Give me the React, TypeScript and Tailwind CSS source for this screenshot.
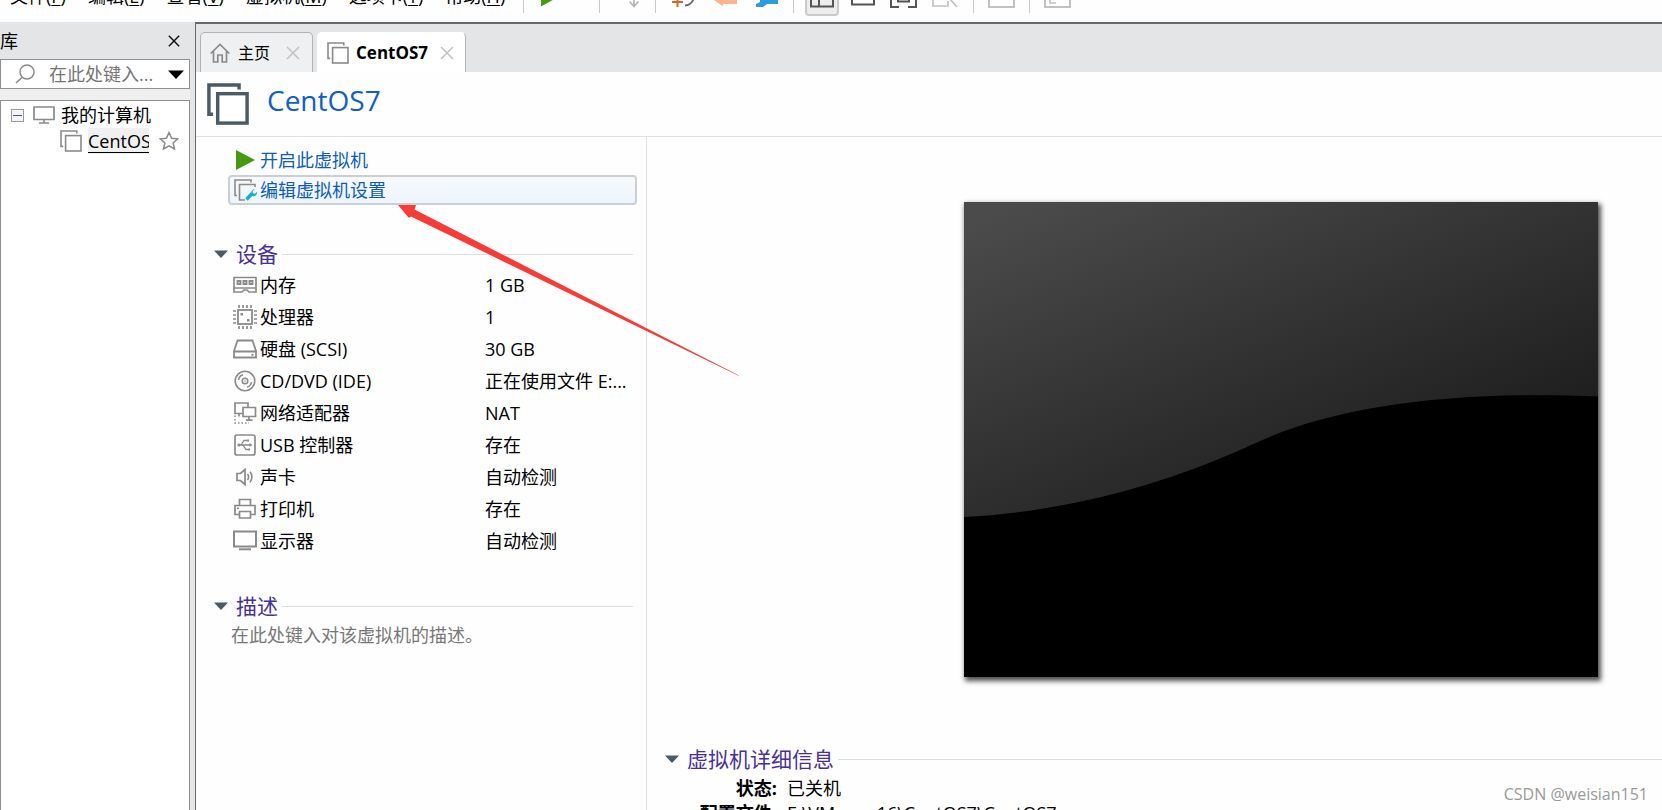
import type { ReactNode } from "react";

const G = "#8a8a8a";

function Icon({ w = 24, h = 24, children, className = "" }: { w?: number; h?: number; children: ReactNode; className?: string }) {
  return (
    <svg width={w} height={h} viewBox={`0 0 ${w} ${h}`} fill="none" className={`shrink-0 ${className}`} aria-hidden="true">
      {children}
    </svg>
  );
}

function VmIcon({ size = 22, color = G, stroke = 1.6 }: { size?: number; color?: string; stroke?: number }) {
  return (
    <svg width={size} height={size} viewBox="0 0 22 22" fill="none" stroke={color} strokeWidth={stroke} className="shrink-0" aria-hidden="true">
      <path d="M3.2 16.4H1V1h15.800v2.400" />
      <rect x="5.600" y="5.600" width="15.400" height="15.400" fill="#fff" />
    </svg>
  );
}

function Cross({ size, color }: { size: number; color: string }) {
  return (
    <svg width={size} height={size} viewBox="0 0 14 14" stroke={color} strokeWidth="1.7" aria-hidden="true">
      <path d="M1 1l12 12M13 1L1 13" />
    </svg>
  );
}

const menus = [
  { label: "文件", key: "F" },
  { label: "编辑", key: "E" },
  { label: "查看", key: "V" },
  { label: "虚拟机", key: "M" },
  { label: "选项卡", key: "T" },
  { label: "帮助", key: "H" },
];

function Separator() {
  return <div className="h-[34px] w-px shrink-0 bg-[#c9c9c9]" />;
}

function Toolbar() {
  return (
    <header className="flex h-[22px] shrink-0 items-end overflow-hidden">
      <div className="flex h-[52px] shrink-0 items-center">
        <nav className="flex w-[523px] shrink-0 gap-[22px] pl-2.5 text-[18px] leading-[24px]">
          {menus.map((m) => (
            <button key={m.key} type="button" className="whitespace-nowrap">
              {m.label}(<u className="underline-offset-2">{m.key}</u>)
            </button>
          ))}
        </nav>
        <Separator />
        <button type="button" aria-label="开启" className="ml-4">
          <Icon><path d="M1 2v20.5L20 12z" fill="#459a10" /></Icon>
        </button>
        <div className="w-[35px]" />
        <Separator />
        <button type="button" aria-label="发送" className="ml-[22px]">
          <Icon><path d="M12 2v20M7.500 17.500L12 22.500l4.500-5" stroke="#b5b5b5" strokeWidth="1.700" /></Icon>
        </button>
        <div className="w-[9px]" />
        <Separator />
        <button type="button" aria-label="拍摄快照" className="ml-4">
          <Icon>
            <path d="M5.500 13v10M0 18h11" stroke="#d8642a" strokeWidth="2" />
            <path d="M5 8a9 9 0 1 1 8 13.500" stroke="#666" strokeWidth="1.900" />
          </Icon>
        </button>
        <button type="button" aria-label="恢复快照" className="ml-[17px]">
          <Icon><path d="M24 10v10H10v2.500L1 16l9-7v1z" fill="#ffb38e" /></Icon>
        </button>
        <button type="button" aria-label="管理快照" className="ml-[18px]">
          <Icon><path d="M5 6h18v14H12l-4 3H1v-3l4-2z" fill="#2d9bdf" /></Icon>
        </button>
        <div className="w-3.5" />
        <Separator />
        <button type="button" aria-label="显示库" className="ml-[11px] flex h-10 w-[34px] items-center justify-center rounded border-2 border-[#c9cbcb] bg-[#ededed]">
          <Icon><path d="M1 1h22v21.500H1zM9 1v21.500M1 15h8" stroke="#555" strokeWidth="2" /></Icon>
        </button>
        <button type="button" aria-label="缩略图" className="ml-3">
          <Icon><path d="M1 3h22v17.500H1z" stroke="#555" strokeWidth="2" /></Icon>
        </button>
        <button type="button" aria-label="全屏" className="ml-[15px]">
          <Icon w={27}><path d="M9 1H1v22h8M18 1h8v22h-8M8 7h11v10.500H8z" stroke="#555" strokeWidth="2" /></Icon>
        </button>
        <button type="button" aria-label="Unity" className="ml-[15px]">
          <Icon w={26}><path d="M1 1v21h15v-5M10 6l15 17" stroke="#c2c2c2" strokeWidth="1.700" /></Icon>
        </button>
        <div className="w-[15px]" />
        <Separator />
        <button type="button" aria-label="控制台" className="ml-3.5">
          <Icon w={27}><path d="M1 1h25v22H1z" stroke="#c2c2c2" strokeWidth="2" /></Icon>
        </button>
        <div className="w-3.5" />
        <Separator />
        <button type="button" aria-label="拉伸" className="ml-3.5">
          <Icon w={27}>
            <path d="M1 1h25v22H1z" stroke="#c2c2c2" strokeWidth="2" />
            <path d="M6 9v10h6M8 16l5-6" stroke="#c2c2c2" strokeWidth="1.700" />
          </Icon>
        </button>
      </div>
    </header>
  );
}

function Library() {
  return (
    <aside className="flex w-[195px] shrink-0 flex-col bg-[#e3e5e7] pr-[5px]">
      <div className="flex h-[37px] items-center justify-between pr-2.5">
        <h2 className="text-[18px] leading-[24px]">库</h2>
        <button type="button" aria-label="关闭库">
          <Cross size={12} color="#111" />
        </button>
      </div>
      <div className="flex h-[30px] shrink-0 items-center border border-[#8e9093] bg-white pr-[5px]">
        <Icon w={20} h={20} className="ml-3.5">
          <circle cx="12" cy="8" r="7" stroke={G} strokeWidth="1.500" />
          <path d="M7 13.500L1 19" stroke={G} strokeWidth="1.600" />
        </Icon>
        <input
          type="text"
          aria-label="在此处键入内容进行搜索"
          placeholder="在此处键入..."
          className="ml-3.5 min-w-0 flex-1 bg-transparent text-[18px] leading-[24px] outline-none placeholder:text-[#757575]"
        />
        <Icon w={16} h={9}><path d="M0 .5h16L8 9z" fill="#000" /></Icon>
      </div>
      <div className="h-[11px] shrink-0 bg-[#efefef]" />
      <ul className="min-h-0 flex-1 border border-b-0 border-[#8e9093] bg-white pt-px text-[18px]">
        <li className="flex h-[26px] items-center pl-2.5">
          <button type="button" aria-label="折叠" className="flex size-[13px] items-center justify-center border border-[#9a9a9a] bg-[#f4f4f4]">
            <span className="h-px w-[9px] bg-[#4054a0]" />
          </button>
          <Icon w={22} h={18} className="ml-[9px]">
            <path d="M1 1h20v12.500H1zM11 13.500V17M6 17h10" stroke={G} strokeWidth="1.700" />
          </Icon>
          <span className="ml-1.5 whitespace-nowrap leading-[26px]">我的计算机</span>
        </li>
        <li className="flex h-[26px] items-center pl-[59px]">
          <VmIcon size={22} />
          <a href="#centos7" className="ml-1.5 w-[61px] overflow-hidden bg-[#f0f0f0] leading-[26px] underline underline-offset-4">
            CentOS7
          </a>
          <Icon w={20} h={20} className="ml-2.5">
            <path d="M10 1.500l2.600 5.700 6.200.6-4.700 4.100 1.400 6.100L10 14.800 4.500 18l1.400-6.100L1.200 7.800l6.200-.6z" stroke={G} strokeWidth="1.500" />
          </Icon>
        </li>
      </ul>
    </aside>
  );
}

function Tabs() {
  return (
    <div role="tablist" className="flex h-[48px] shrink-0 items-end bg-[#e3e5e7] pl-1">
      <div className="flex h-10 w-[113px] items-center rounded-t-[5px] border border-b-0 border-[#b1b3b5] bg-[#eef0f1] pl-[9px]">
        <Icon w={20} h={20}>
          <path d="M.7 10.500L10 1.500l9.300 9M3.500 8.500V19h4.300v-7h4.400v7h4.300V8.500" stroke={G} strokeWidth="1.700" />
        </Icon>
        <button type="button" role="tab" aria-selected="false" className="ml-2 text-[16px] leading-[24px]">主页</button>
        <button type="button" aria-label="关闭主页" className="ml-4"><Cross size={14} color="#c4c4c4" /></button>
      </div>
      <div className="ml-1 flex h-10 w-[149px] items-center rounded-t-[5px] border border-b-0 border-[#b1b3b5] border-l-white border-t-white bg-white pl-[9px]">
        <VmIcon size={22} />
        <button type="button" role="tab" aria-selected="true" className="ml-[7px] w-[72px] text-left text-[17px] leading-[24px] font-bold">CentOS7</button>
        <button type="button" aria-label="关闭 CentOS7" className="ml-3"><Cross size={14} color="#c4c4c4" /></button>
      </div>
    </div>
  );
}

function SectionTitle({ children }: { children: ReactNode }) {
  return (
    <div className="flex h-[30px] items-center">
      <Icon w={14} h={8}><path d="M0 .5h14L7 8z" fill="#4a5a66" /></Icon>
      <h3 className="ml-2 text-[21px] leading-[30px] text-[#48309a]">{children}</h3>
      <div className="ml-1 h-px flex-1 bg-[#dcdfe0]" />
    </div>
  );
}

const memory = (
  <Icon>
    <path d="M1 4.500h22v14.500h-7l-2-2h-3l-2 2H1zM1 15h22" stroke={G} strokeWidth="1.700" />
    <path d="M4.500 8h3v3h-3zM10.500 8h3v3h-3zM16.500 8h3v3h-3z" stroke={G} strokeWidth="1.900" />
  </Icon>
);
const cpu = (
  <Icon>
    <rect x="5" y="5" width="14" height="14" stroke={G} strokeWidth="1.800" />
    <path d="M6 0v3M10 0v3M14 0v3M18 0v3M6 21v3M10 21v3M14 21v3M18 21v3M0 6h3M0 10h3M0 14h3M0 18h3M21 6h3M21 10h3M21 14h3M21 18h3" stroke={G} strokeWidth="1.700" />
    <path d="M7.500 8h2.500v2.500H7.500zM14 14h2.500v2.500H14z" fill={G} />
  </Icon>
);
const disk = (
  <Icon>
    <path d="M1 14L4.500 3.500h15L23 14v6.500H1zM1 14.500h22" stroke={G} strokeWidth="1.800" />
    <path d="M18.500 16.800h2v2h-2z" fill={G} />
  </Icon>
);
const disc = (
  <Icon>
    <circle cx="12" cy="12" r="9.800" stroke={G} strokeWidth="1.600" />
    <circle cx="12" cy="12" r="2.800" stroke={G} strokeWidth="1.500" />
    <circle cx="12" cy="12" r=".8" fill={G} />
    <path d="M5.500 11A6.500 6.500 0 0 1 10 5.800M18.500 13a6.500 6.500 0 0 1-4.500 5.200" stroke={G} strokeWidth="1.500" />
  </Icon>
);
const network = (
  <Icon>
    <path d="M9 12.500H2V2h13v4M6 15.500v-3M10 6.500h12.500v9H10zM16 15.500V19M13 19.200h6.500" stroke={G} strokeWidth="1.700" />
    <path d="M2 14.500V22h14" stroke={G} strokeWidth="1.500" strokeDasharray="1.500 2" />
  </Icon>
);
const usb = (
  <Icon>
    <rect x="2" y="2" width="20" height="20" rx="2" stroke={G} strokeWidth="1.700" />
    <path d="M5 12h12M8 12l3-4.500h3M10 12l3 4.500h2" stroke={G} strokeWidth="1.300" />
    <circle cx="6" cy="12" r="1.600" fill={G} />
    <path d="M16.500 10l3 2-3 2zM14 6.500h2v2h-2zM15 15.500h2v2h-2z" fill={G} />
  </Icon>
);
const sound = (
  <Icon>
    <path d="M4 8.500h3.500L12 4.500v15l-4.500-4H4z" stroke={G} strokeWidth="1.700" />
    <path d="M14.500 9a5 5 0 0 1 0 6M17 6.800a8 8 0 0 1 0 10.400" stroke={G} strokeWidth="1.600" />
  </Icon>
);
const printer = (
  <Icon>
    <path d="M6.500 8.500v-6h11v6M6.500 17.500H2v-9h20v9h-4.500M6.500 14.500h11v6.500h-11z" stroke={G} strokeWidth="1.700" />
    <path d="M4 10.500h2v1.500H4z" fill={G} />
  </Icon>
);
const display = (
  <Icon>
    <path d="M1 2.500h22v15H1z" stroke={G} strokeWidth="2" />
    <path d="M6 20.300h12" stroke={G} strokeWidth="2" />
  </Icon>
);

const devices = [
  { icon: memory, name: "内存", value: "1 GB" },
  { icon: cpu, name: "处理器", value: "1" },
  { icon: disk, name: "硬盘 (SCSI)", value: "30 GB" },
  { icon: disc, name: "CD/DVD (IDE)", value: "正在使用文件 E:..." },
  { icon: network, name: "网络适配器", value: "NAT" },
  { icon: usb, name: "USB 控制器", value: "存在" },
  { icon: sound, name: "声卡", value: "自动检测" },
  { icon: printer, name: "打印机", value: "存在" },
  { icon: display, name: "显示器", value: "自动检测" },
];

function Summary() {
  return (
    <section className="w-[451px] shrink-0 border-r border-[#e0e2e3] pt-2 pr-[9px] text-[18px]">
      <div className="pl-8">
        <button type="button" className="flex h-[30px] w-full items-center pl-2 text-[#0d5cb8]">
          <Icon w={20} h={20}><path d="M0 0v20l19-10z" fill="#459a10" /></Icon>
          <span className="ml-1 leading-[26px]">开启此虚拟机</span>
        </button>
        <button type="button" className="flex h-[30px] w-full items-center rounded-[4px] border-2 border-[#cccfd2] bg-linear-to-b from-[#f7f9fb] to-[#edf5fd] pl-1 text-[#0d5cb8]">
          <Icon w={23} h={22}>
            <path d="M3 16.500H1V1h16v2.500" stroke={G} strokeWidth="1.600" />
            <path d="M21 8V5.500H5.500V21H11" stroke={G} strokeWidth="1.600" />
            <path d="M12.500 20.500l5.500-6" stroke="#14b0cf" strokeWidth="3.400" />
            <path d="M21 9.800l-2.500 2.500.5 2 2 .5 2-2c.5 3-2 5-4.500 4.200-2-1.200-2.200-6 2.500-7.200z" fill="#14b0cf" />
          </Icon>
          <span className="ml-[3px] leading-[26px]">编辑虚拟机设置</span>
        </button>
      </div>

      <div className="mt-[34px] pr-1 pl-[18px]">
        <SectionTitle>设备</SectionTitle>
        <table className="ml-[19px] w-[400px] table-fixed border-collapse text-left">
          <colgroup>
            <col className="w-[252px]" />
            <col />
          </colgroup>
          <tbody>
            {devices.map((d) => (
              <tr key={d.name} className="h-8">
                <th scope="row" className="p-0 font-normal">
                  <div className="flex h-8 items-center gap-[3px]">
                    {d.icon}
                    <span className="leading-[26px]">{d.name}</span>
                  </div>
                </th>
                <td className="p-0 leading-[26px] whitespace-nowrap">{d.value}</td>
              </tr>
            ))}
          </tbody>
        </table>
      </div>

      <div className="mt-[34px] pr-1 pl-[18px]">
        <SectionTitle>描述</SectionTitle>
        <p className="pl-[17px] leading-[28px] text-[#777]">在此处键入对该虚拟机的描述。</p>
      </div>
    </section>
  );
}

function Preview() {
  return (
    <div className="ml-[317px] w-[634px] max-w-full shrink-0 shadow-[2px_3px_5px_1px_rgba(0,0,0,0.7)]">
      <svg viewBox="0 0 634 475" className="block w-full" role="img" aria-label="虚拟机屏幕">
        <defs>
          <linearGradient id="screen" gradientUnits="userSpaceOnUse" x1="10" y1="20" x2="203" y2="480">
            <stop offset="0" stopColor="#4b4b4b" />
            <stop offset="1" stopColor="#141414" />
          </linearGradient>
        </defs>
        <path d="M0 0h634v475H0z" fill="url(#screen)" />
        <path d="M0 315C100 310 200 283 285 244C360 208 470 188 634 194.500V475H0z" fill="#000" />
      </svg>
    </div>
  );
}

function Details() {
  return (
    <section className="flex min-w-0 flex-1 flex-col pt-[65px] text-[18px]">
      <Preview />
      <div className="mt-[67px] pl-[18px]">
        <SectionTitle>虚拟机详细信息</SectionTitle>
        <dl className="grid grid-cols-[112px_1fr] gap-x-2.5 pt-0.5 leading-[25px]">
          <dt className="text-right font-bold">状态:</dt>
          <dd>已关机</dd>
          <dt className="text-right font-bold">配置文件:</dt>
          <dd>E:\VMware16\CentOS7\CentOS7</dd>
        </dl>
      </div>
    </section>
  );
}

export default function App() {
  return (
    <div className="relative flex h-screen flex-col overflow-hidden bg-[#fefefe] font-['Open_Sans','Noto_Sans_CJK_SC',sans-serif] text-black">
      <Toolbar />
      <div className="flex min-h-0 flex-1">
        <Library />
        <main className="flex min-w-0 flex-1 flex-col border-t-2 border-l border-[#67696b]">
          <Tabs />
          <div className="flex h-[65px] shrink-0 items-center border-b border-[#e0e2e3] pl-[11px]">
            <VmIcon size={42} color="#4c5a66" stroke={1.800} />
            <h1 className="ml-[18px] pb-2 text-[28px] leading-[40px] text-[#0f5fc4]">CentOS7</h1>
          </div>
          <div className="flex min-h-0 flex-1 overflow-hidden">
            <Summary />
            <Details />
          </div>
        </main>
      </div>
      <svg width="342" height="172" viewBox="0 0 342 172" className="pointer-events-none absolute top-[205px] left-[398px]" aria-hidden="true">
        <path d="M0 0H18L16.500 4.500L341 170.500L340 170.500L13 11.500L11 13z" fill="#f83b37" />
      </svg>
      <p className="absolute right-3.5 bottom-1 text-[16px] leading-[24px] text-[#999]">CSDN @weisian151</p>
    </div>
  );
}
